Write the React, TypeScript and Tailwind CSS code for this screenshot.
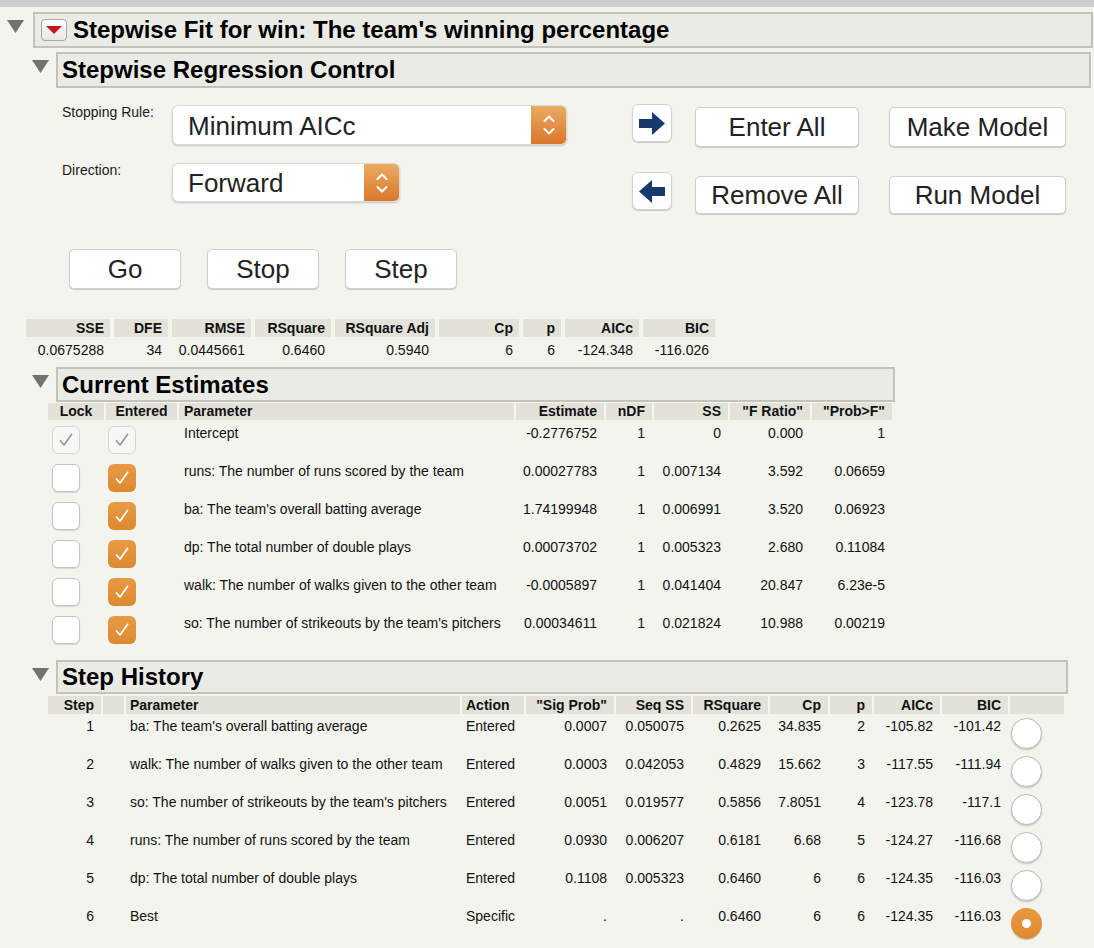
import React from "react";

const summaryCols = [
  { h: "SSE", w: "w-[84px]", v: "0.0675288" },
  { h: "DFE", w: "w-[54px]", v: "34" },
  { h: "RMSE", w: "w-[79px]", v: "0.0445661" },
  { h: "RSquare", w: "w-[76px]", v: "0.6460" },
  { h: "RSquare Adj", w: "w-[100px]", v: "0.5940" },
  { h: "Cp", w: "w-[80px]", v: "6" },
  { h: "p", w: "w-[38px]", v: "6" },
  { h: "AICc", w: "w-[74px]", v: "-124.348" },
  { h: "BIC", w: "w-[72px]", v: "-116.026" },
];

const estimates = [
  { name: "Intercept", est: "-0.2776752", ndf: "1", ss: "0", f: "0.000", p: "1", locked: true },
  { name: "runs: The number of runs scored by the team", est: "0.00027783", ndf: "1", ss: "0.007134", f: "3.592", p: "0.06659" },
  { name: "ba: The team's overall batting average", est: "1.74199948", ndf: "1", ss: "0.006991", f: "3.520", p: "0.06923" },
  { name: "dp: The total number of double plays", est: "0.00073702", ndf: "1", ss: "0.005323", f: "2.680", p: "0.11084" },
  { name: "walk: The number of walks given to the other team", est: "-0.0005897", ndf: "1", ss: "0.041404", f: "20.847", p: "6.23e-5" },
  { name: "so: The number of strikeouts by the team's pitchers", est: "0.00034611", ndf: "1", ss: "0.021824", f: "10.988", p: "0.00219" },
];

const history = [
  ["1", "ba: The team's overall batting average", "Entered", "0.0007", "0.050075", "0.2625", "34.835", "2", "-105.82", "-101.42"],
  ["2", "walk: The number of walks given to the other team", "Entered", "0.0003", "0.042053", "0.4829", "15.662", "3", "-117.55", "-111.94"],
  ["3", "so: The number of strikeouts by the team's pitchers", "Entered", "0.0051", "0.019577", "0.5856", "7.8051", "4", "-123.78", "-117.1"],
  ["4", "runs: The number of runs scored by the team", "Entered", "0.0930", "0.006207", "0.6181", "6.68", "5", "-124.27", "-116.68"],
  ["5", "dp: The total number of double plays", "Entered", "0.1108", "0.005323", "0.6460", "6", "6", "-124.35", "-116.03"],
  ["6", "Best", "Specific", ".", ".", "0.6460", "6", "6", "-124.35", "-116.03"],
];

function Tri() {
  return (
    <svg width="17" height="13" viewBox="0 0 17 13" className="shrink-0">
      <polygon points="0,0 17,0 8.5,13" fill="#727272" />
    </svg>
  );
}

function Outline({ title, width, height, red }: { title: string; width: string; height: string; red?: boolean }) {
  return (
    <div className={`flex items-center border-2 border-[#c3c3bb] bg-[#ebebe5] ${width} ${height}`}>
      {red && (
        <div className="ml-[6px] mr-[6px] w-[26px] h-[22px] rounded-[4px] border border-[#a8a8a8] bg-gradient-to-b from-white to-[#e6e6e6] flex items-center justify-center">
          <svg width="16" height="8" viewBox="0 0 16 8">
            <polygon points="0,0 16,0 8,8" fill="#c8161b" />
          </svg>
        </div>
      )}
      <span className={`text-[24px] font-bold text-black leading-none ${red ? "" : "ml-[4px]"}`}>{title}</span>
    </div>
  );
}

function Btn({ label, w, h = "h-[40px]", extra = "" }: { label: string; w: string; h?: string; extra?: string }) {
  return (
    <div
      className={`${w} ${h} ${extra} bg-white rounded-[5px] border border-[#cfcfcf] shadow-[0_1px_1px_rgba(0,0,0,0.18)] flex items-center justify-center text-[26px] text-[#222]`}
    >
      {label}
    </div>
  );
}

function Select({ label, w, h }: { label: string; w: string; h: string }) {
  return (
    <div className={`${w} ${h} flex bg-white rounded-[6px] border border-[#dadada] shadow-[0_1px_2px_rgba(0,0,0,0.2)] overflow-hidden`}>
      <div className="flex-1 flex items-center pl-[15px] pt-[2px] text-[26px] text-[#222]">{label}</div>
      <div className="w-[35px] bg-gradient-to-b from-[#eaab62] to-[#d9772b] flex items-center justify-center">
        <svg width="12" height="22" viewBox="0 0 12 22" fill="none" stroke="white" strokeWidth="2" strokeLinecap="round" strokeLinejoin="round">
          <polyline points="1.5,7 6,2.5 10.5,7" />
          <polyline points="1.5,15 6,19.5 10.5,15" />
        </svg>
      </div>
    </div>
  );
}

function ArrowBtn({ dir }: { dir: "r" | "l" }) {
  return (
    <div className="w-[40px] h-[38px] bg-white rounded-[6px] border border-[#d2d2d2] shadow-[0_1px_1px_rgba(0,0,0,0.18)] flex items-center justify-center">
      <svg width="26" height="23" viewBox="0 0 26 23">
        {dir === "r" ? (
          <polygon points="0,7 13,7 13,0 26,11.5 13,23 13,16 0,16" fill="#17396e" />
        ) : (
          <polygon points="26,7 13,7 13,0 0,11.5 13,23 13,16 26,16" fill="#17396e" />
        )}
      </svg>
    </div>
  );
}

function Check({ state }: { state: "off" | "on" | "dis" }) {
  if (state === "off") {
    return <div className="w-[28px] h-[28px] rounded-[6px] bg-white border border-[#c4c4c4] shadow-[0_1px_1px_rgba(0,0,0,0.12)]" />;
  }
  const on = state === "on";
  return (
    <div
      className={`w-[28px] h-[28px] rounded-[6px] flex items-center justify-center ${
        on ? "bg-gradient-to-b from-[#e89a44] to-[#dc8a30]" : "bg-[#f7f7f5] border border-[#d6d6d6]"
      }`}
    >
      <svg width="16" height="16" viewBox="0 0 16 16" fill="none" stroke={on ? "white" : "#9a9a9a"} strokeWidth="1.8" strokeLinecap="round" strokeLinejoin="round">
        <polyline points="2.5,9 6,13 13.5,2.5" />
      </svg>
    </div>
  );
}

const hd = "h-full bg-[#e2e2d9] flex items-center font-bold text-[14px]";

export default function App() {
  return (
    <div className="w-[1094px] h-[948px] overflow-hidden bg-[#f4f4ef] text-[#111] font-['Liberation_Sans',Arial,sans-serif]">
      <div className="h-[7px] bg-[#cdcdcd]" />

      {/* level 1 */}
      <div className="flex items-start mt-[5px]">
        <div className="ml-[7px] mt-[8px]"><Tri /></div>
        <div className="ml-[9px]">
          <Outline title="Stepwise Fit for win: The team's winning percentage" width="w-[1060px]" height="h-[36px]" red />
        </div>
      </div>

      {/* level 2 */}
      <div className="flex items-start mt-[4px]">
        <div className="ml-[32px] mt-[8px]"><Tri /></div>
        <div className="ml-[7px]">
          <Outline title="Stepwise Regression Control" width="w-[1035px]" height="h-[36px]" />
        </div>
      </div>

      {/* controls */}
      <div className="flex items-start mt-[16px]">
        <div className="ml-[62px] flex flex-col">
          <div className="flex items-start">
            <div className="w-[110px] text-[14px] leading-[16px] text-[#1a1a1a]">Stopping Rule:</div>
            <div className="mt-[1px]"><Select label="Minimum AICc" w="w-[395px]" h="h-[40px]" /></div>
          </div>
          <div className="flex items-start mt-[17px]">
            <div className="w-[110px] text-[14px] leading-[16px] text-[#1a1a1a]">Direction:</div>
            <div className="mt-[1px]"><Select label="Forward" w="w-[228px]" h="h-[39px]" /></div>
          </div>
        </div>
        <div className="ml-[65px] flex flex-col">
          <div className="flex items-start">
            <ArrowBtn dir="r" />
            <Btn label="Enter All" w="w-[164px]" extra="ml-[23px] mt-[3px]" />
            <Btn label="Make Model" w="w-[177px]" extra="ml-[30px] mt-[3px]" />
          </div>
          <div className="flex items-start mt-[25px]">
            <ArrowBtn dir="l" />
            <Btn label="Remove All" w="w-[164px]" h="h-[38px]" extra="ml-[23px] mt-[4px]" />
            <Btn label="Run Model" w="w-[177px]" h="h-[38px]" extra="ml-[30px] mt-[4px]" />
          </div>
        </div>
      </div>

      <div className="flex gap-[26px] ml-[69px] mt-[35px]">
        <Btn label="Go" w="w-[112px]" />
        <Btn label="Stop" w="w-[112px]" />
        <Btn label="Step" w="w-[112px]" />
      </div>

      {/* summary */}
      <div className="ml-[26px] mt-[30px]">
        <div className="flex gap-[4px] h-[18px]">
          {summaryCols.map((c) => (
            <div key={c.h} className={`${c.w} ${hd} justify-end pr-[6px]`}>{c.h}</div>
          ))}
        </div>
        <div className="flex gap-[4px] h-[18px] mt-[4px] text-[14px] leading-[18px]">
          {summaryCols.map((c) => (
            <div key={c.h} className={`${c.w} text-right pr-[6px]`}>{c.v}</div>
          ))}
        </div>
      </div>

      {/* current estimates */}
      <div className="flex items-start mt-[8px]">
        <div className="ml-[32px] mt-[8px]"><Tri /></div>
        <div className="ml-[7px]">
          <Outline title="Current Estimates" width="w-[839px]" height="h-[35px]" />
        </div>
      </div>

      <div className="ml-[48px] mt-[1px]">
        <div className="flex gap-[2px] h-[17px]">
          <div className={`w-[56px] ${hd} justify-center`}>Lock</div>
          <div className={`w-[71px] ${hd} justify-center`}>Entered</div>
          <div className={`w-[335px] ${hd} pl-[5px]`}>Parameter</div>
          <div className={`w-[88px] ${hd} justify-end pr-[7px]`}>Estimate</div>
          <div className={`w-[46px] ${hd} justify-end pr-[7px]`}>nDF</div>
          <div className={`w-[74px] ${hd} justify-end pr-[7px]`}>SS</div>
          <div className={`w-[80px] ${hd} justify-end pr-[7px]`}>"F Ratio"</div>
          <div className={`w-[80px] ${hd} justify-end pr-[7px]`}>"Prob&gt;F"</div>
        </div>
        {estimates.map((r) => (
          <div key={r.name} className="flex gap-[2px] h-[38px] text-[14px] leading-[17px]">
            <div className="w-[56px] pl-[4px] pt-[6px]"><Check state={r.locked ? "dis" : "off"} /></div>
            <div className="w-[71px] pl-[2px] pt-[6px]"><Check state={r.locked ? "dis" : "on"} /></div>
            <div className="w-[335px] pl-[5px] pt-[5px]">{r.name}</div>
            <div className="w-[88px] pr-[7px] pt-[5px] text-right">{r.est}</div>
            <div className="w-[46px] pr-[7px] pt-[5px] text-right">{r.ndf}</div>
            <div className="w-[74px] pr-[7px] pt-[5px] text-right">{r.ss}</div>
            <div className="w-[80px] pr-[7px] pt-[5px] text-right">{r.f}</div>
            <div className="w-[80px] pr-[7px] pt-[5px] text-right">{r.p}</div>
          </div>
        ))}
      </div>

      {/* step history */}
      <div className="flex items-start mt-[12px]">
        <div className="ml-[32px] mt-[8px]"><Tri /></div>
        <div className="ml-[7px]">
          <Outline title="Step History" width="w-[1012px]" height="h-[34px]" />
        </div>
      </div>

      <div className="ml-[48px] mt-[2px]">
        <div className="flex gap-[2px] h-[18px]">
          <div className={`w-[53px] ${hd} justify-end pr-[7px]`}>Step</div>
          <div className={`w-[21px] ${hd}`} />
          <div className={`w-[334px] ${hd} pl-[4px]`}>Parameter</div>
          <div className={`w-[62px] ${hd} pl-[4px]`}>Action</div>
          <div className={`w-[88px] ${hd} justify-end pr-[7px]`}>"Sig Prob"</div>
          <div className={`w-[75px] ${hd} justify-end pr-[7px]`}>Seq SS</div>
          <div className={`w-[75px] ${hd} justify-end pr-[7px]`}>RSquare</div>
          <div className={`w-[58px] ${hd} justify-end pr-[7px]`}>Cp</div>
          <div className={`w-[42px] ${hd} justify-end pr-[7px]`}>p</div>
          <div className={`w-[66px] ${hd} justify-end pr-[7px]`}>AICc</div>
          <div className={`w-[66px] ${hd} justify-end pr-[7px]`}>BIC</div>
          <div className={`w-[54px] ${hd}`} />
        </div>
        {history.map((r, i) => (
          <div key={r[0]} className="flex gap-[2px] h-[38px] text-[14px] leading-[17px]">
            <div className="w-[53px] pr-[7px] pt-[4px] text-right">{r[0]}</div>
            <div className="w-[21px]" />
            <div className="w-[334px] pl-[4px] pt-[4px] whitespace-nowrap">{r[1]}</div>
            <div className="w-[62px] pl-[4px] pt-[4px]">{r[2]}</div>
            <div className="w-[88px] pr-[7px] pt-[4px] text-right">{r[3]}</div>
            <div className="w-[75px] pr-[7px] pt-[4px] text-right">{r[4]}</div>
            <div className="w-[75px] pr-[7px] pt-[4px] text-right">{r[5]}</div>
            <div className="w-[58px] pr-[7px] pt-[4px] text-right">{r[6]}</div>
            <div className="w-[42px] pr-[7px] pt-[4px] text-right">{r[7]}</div>
            <div className="w-[66px] pr-[7px] pt-[4px] text-right">{r[8]}</div>
            <div className="w-[66px] pr-[7px] pt-[4px] text-right">{r[9]}</div>
            <div className="w-[54px] pl-[1px] pt-[4px]">
              {i === history.length - 1 ? (
                <div className="w-[31px] h-[31px] rounded-full bg-gradient-to-b from-[#e8993f] to-[#de8a2e] flex items-center justify-center shadow-[0_1px_1px_rgba(0,0,0,0.2)]">
                  <div className="w-[9px] h-[9px] rounded-full bg-white" />
                </div>
              ) : (
                <div className="w-[31px] h-[31px] rounded-full bg-white border border-[#bdbdbd] shadow-[0_1px_2px_rgba(0,0,0,0.2)]" />
              )}
            </div>
          </div>
        ))}
      </div>
    </div>
  );
}
